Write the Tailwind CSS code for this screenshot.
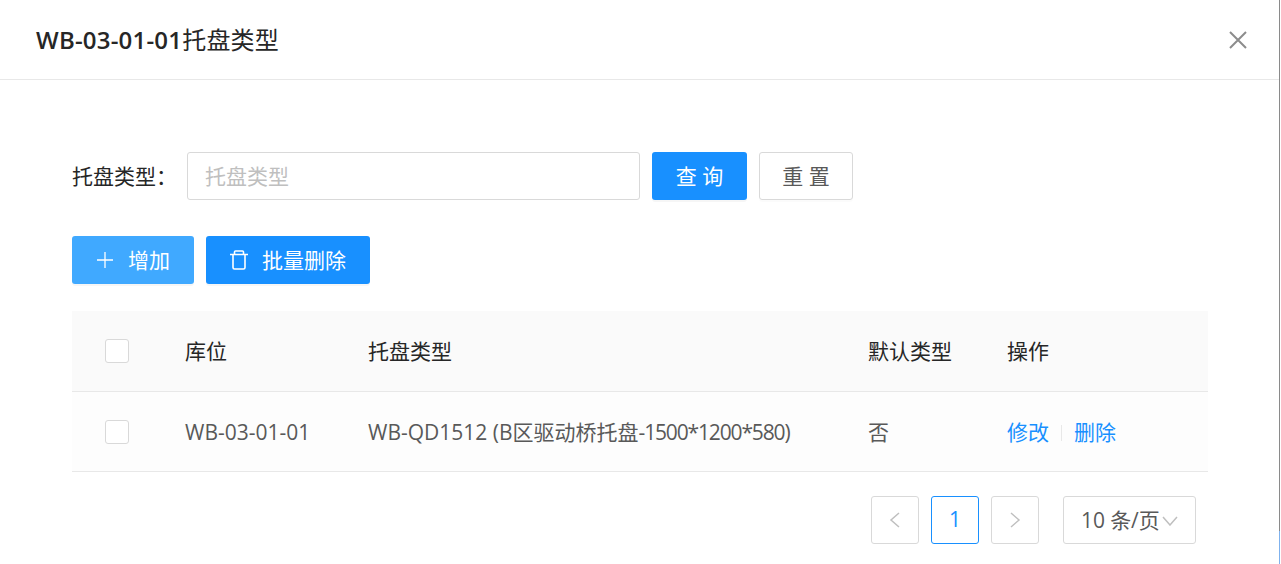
<!DOCTYPE html>
<html lang="zh">
<head>
<meta charset="UTF-8">
<title>托盘类型</title>
<script src="https://cdn.jsdelivr.net/npm/@tailwindcss/browser@4"></script>
</head>
<body class="bg-white overflow-hidden font-['Open_Sans','Noto_Sans_CJK_SC',sans-serif] text-[21px] text-[#595959]">
<div class="relative w-[1279px] h-[564px]">
  <!-- window edge on the right -->
  <div class="absolute left-[1279px] top-0 w-px h-[531px] bg-[#8a8a8a]"></div>
  <div class="absolute left-[1279px] top-[531px] w-px h-[33px] bg-[#7fb2ee]"></div>

  <!-- header -->
  <div class="h-[80px] border-b border-[#e8e8e8] pl-[36px] pr-[32px] flex items-center justify-between">
    <div class="text-[24px] font-semibold text-[#262626] tracking-[0.2px]">WB-03-01-01<span class="font-normal">托盘类型</span></div>
    <svg class="w-[20px] h-[20px] text-[#8c8c8c] translate-x-[1px]" viewBox="0 0 20 20" fill="none" stroke="currentColor" stroke-width="2"><path d="M2 2l16 16M18 2L2 18"/></svg>
  </div>

  <div class="px-[72px] pt-[72px]">
    <!-- search -->
    <div class="flex items-center h-[48px]">
      <span class="w-[115px] pt-[2px] text-[#262626]">托盘类型：</span>
      <div class="w-[453px] h-[48px] border border-[#d9d9d9] rounded-[3px] pl-[17px] pt-[2px] flex items-center text-[#bfbfbf]">托盘类型</div>
      <button class="ml-[12px] w-[95px] h-[48px] pt-[2px] bg-[#1890ff] text-white rounded-[3px] shadow-[0_2px_0_rgba(0,0,0,0.035)]">查 询</button>
      <button class="ml-[12px] w-[94px] h-[48px] pt-[2px] border border-[#d9d9d9] rounded-[3px] shadow-[0_2px_0_rgba(0,0,0,0.015)]">重 置</button>
    </div>

    <!-- actions -->
    <div class="flex items-center gap-[12px] mt-[36px]">
      <button class="w-[122px] h-[48px] bg-[#40a9ff] text-white rounded-[3px] shadow-[0_2px_0_rgba(0,0,0,0.035)] flex items-center justify-center gap-[14px]">
        <svg class="w-[18px] h-[18px]" viewBox="0 0 18 18" fill="none" stroke="currentColor" stroke-width="1.3"><path d="M9 1v16M1 9h16"/></svg>
        <span class="pt-[2px]">增加</span>
      </button>
      <button class="w-[164px] h-[48px] bg-[#1890ff] text-white rounded-[3px] shadow-[0_2px_0_rgba(0,0,0,0.035)] flex items-center justify-center gap-[14px]">
        <svg class="w-[18px] h-[20px]" viewBox="0 0 18 20" fill="none" stroke="currentColor" stroke-width="1.6"><path d="M0 4.500h18M4.500 4.500V2a1 1 0 0 1 1-1h7a1 1 0 0 1 1 1v2.500M3 4.500v13a1.500 1.500 0 0 0 1.500 1.500h9a1.500 1.500 0 0 0 1.500-1.500v-13"/></svg>
        <span class="pt-[2px]">批量删除</span>
      </button>
    </div>

    <!-- table -->
    <div class="mt-[27px] w-[1136px]">
      <div class="flex items-center h-[81px] bg-[#fafafa] border-b border-[#e8e8e8] text-[#262626]">
        <div class="w-[113px] pl-[33px]"><div class="w-[24px] h-[24px] bg-white border border-[#d9d9d9] rounded-[3px]"></div></div>
        <div class="w-[183px] pt-[2px]">库位</div>
        <div class="w-[500px] pt-[2px]">托盘类型</div>
        <div class="w-[139px] pt-[2px]">默认类型</div>
        <div class="pt-[2px]">操作</div>
      </div>
      <div class="flex items-center h-[80px] bg-[#fdfdfd] border-b border-[#e8e8e8]">
        <div class="w-[113px] pl-[33px]"><div class="w-[24px] h-[24px] bg-white border border-[#d9d9d9] rounded-[3px]"></div></div>
        <div class="w-[183px] pt-[2px]">WB-03-01-01</div>
        <div class="w-[500px] pt-[2px]">WB-QD1512 (B区驱动桥托盘<span class="tracking-[-1.15px]">-1500*1200*580)</span></div>
        <div class="w-[139px] pt-[2px]">否</div>
        <div class="flex items-center pt-[2px] text-[#1890ff]">
          <span>修改</span>
          <span class="w-px h-[16px] bg-[#e8e8e8] mx-[12px]"></span>
          <span>删除</span>
        </div>
      </div>
    </div>

    <!-- pagination -->
    <div class="w-[1124px] flex justify-end items-center mt-[24px]">
      <div class="w-[48px] h-[48px] border border-[#d9d9d9] rounded-[3px] flex items-center justify-center text-[#bfbfbf]">
        <svg class="w-[14px] h-[16px]" viewBox="0 0 14 16" fill="none" stroke="currentColor" stroke-width="1.5"><path d="M11 1L3 8l8 7"/></svg>
      </div>
      <div class="ml-[12px] w-[48px] h-[48px] border border-[#1890ff] rounded-[3px] flex items-center justify-center text-[#1890ff]">1</div>
      <div class="ml-[12px] w-[48px] h-[48px] border border-[#d9d9d9] rounded-[3px] flex items-center justify-center text-[#bfbfbf]">
        <svg class="w-[14px] h-[16px]" viewBox="0 0 14 16" fill="none" stroke="currentColor" stroke-width="1.5"><path d="M3 1l8 7-8 7"/></svg>
      </div>
      <div class="ml-[24px] w-[133px] h-[48px] border border-[#d9d9d9] rounded-[3px] pl-[17px] pt-[1px] flex items-center">
        <span class="tracking-[-0.1px]">10 条/页</span>
        <svg class="w-[16px] h-[10px] ml-[2px] text-[#bfbfbf]" viewBox="0 0 16 10" fill="none" stroke="currentColor" stroke-width="1.500"><path d="M1 1l7 8 7-8"/></svg>
      </div>
    </div>
  </div>
</div>
</body>
</html>
